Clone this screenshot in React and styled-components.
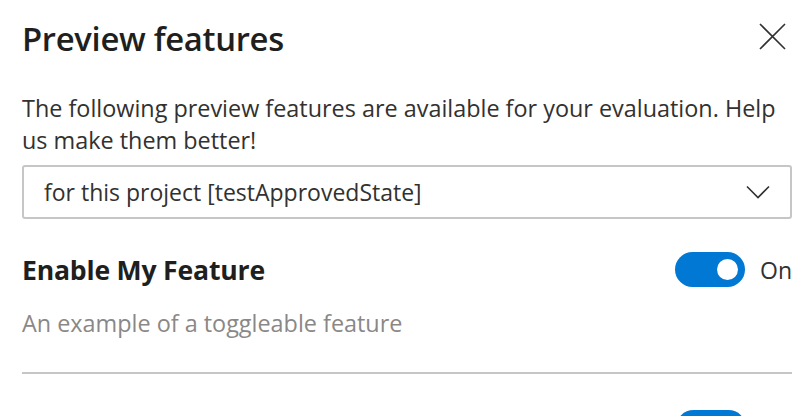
import { useState } from "react";
import styled, { createGlobalStyle } from "styled-components";

const GlobalStyle = createGlobalStyle`
  html, body {
    margin: 0;
    padding: 0;
    background: #ffffff;
    overflow: hidden;
  }
  body {
    font-family: "Open Sans", "Noto Sans", sans-serif;
    color: #323130;
  }
`;

const Panel = styled.div`
  width: 811px;
  height: 416px;
  box-sizing: border-box;
  padding: 0 19px 0 22px;
  overflow: hidden;
`;

const Header = styled.div`
  height: 76px;
  display: flex;
  align-items: center;
  justify-content: space-between;
`;

const Title = styled.h1`
  margin: 0;
  font-size: 32.8px;
  font-weight: 600;
  color: #201f1e;
  letter-spacing: -0.3px;
`;

const CloseButton = styled.button`
  width: 30px;
  height: 30px;
  margin: -4px 5px 0 0;
  padding: 0;
  border: none;
  background: transparent;
  display: flex;
  align-items: center;
  justify-content: center;
  cursor: pointer;
`;

const Intro = styled.p`
  margin: 16px 0 0;
  font-size: 23.4px;
  line-height: 32px;
  color: #323130;
`;

const Dropdown = styled.button`
  margin-top: 9px;
  width: 100%;
  height: 54px;
  box-sizing: border-box;
  border: 2px solid #c8c6c4;
  border-radius: 3px;
  background: #ffffff;
  display: flex;
  align-items: center;
  justify-content: space-between;
  padding: 0 20px;
  font-family: inherit;
  font-size: 23px;
  color: #323130;
  cursor: pointer;
`;

const Feature = styled.div`
  margin-top: ${(p) => p.$gap}px;
`;

const FeatureHead = styled.div`
  height: 35px;
  display: flex;
  align-items: center;
  justify-content: space-between;
`;

const FeatureName = styled.h2`
  margin: 0;
  font-size: 26.6px;
  font-weight: 700;
  color: #201f1e;
  letter-spacing: -0.2px;
`;

const ToggleWrap = styled.label`
  display: flex;
  align-items: center;
  gap: 15px;
  font-size: 23px;
  color: #323130;
  cursor: pointer;
`;

const Track = styled.span`
  width: 70px;
  height: 35px;
  box-sizing: border-box;
  border-radius: 18px;
  background: ${(p) => (p.$on ? "#0078d4" : "#ffffff")};
  border: ${(p) => (p.$on ? "none" : "2px solid #605e5c")};
  display: flex;
  align-items: center;
  justify-content: ${(p) => (p.$on ? "flex-end" : "flex-start")};
  padding: 0 7px;
`;

const Knob = styled.span`
  width: 21px;
  height: 21px;
  border-radius: 50%;
  background: ${(p) => (p.$on ? "#ffffff" : "#605e5c")};
`;

const FeatureDesc = styled.div`
  margin-top: 21px;
  font-size: 23.4px;
  line-height: 30px;
  color: #8a8886;
`;

const Divider = styled.hr`
  margin: 34px 0 0;
  border: none;
  height: 2px;
  background: #c8c6c4;
`;

// the next row is only partly in view: just its switch shows above the fold
const NextRow = styled.div`
  margin-top: 36px;
  display: flex;
  justify-content: flex-end;
  padding-right: 46px;
`;

const Toggle = ({ on, onChange }) => (
  <ToggleWrap onClick={onChange}>
    <Track $on={on}>
      <Knob $on={on} />
    </Track>
    <span>{on ? "On" : "Off"}</span>
  </ToggleWrap>
);

const App = () => {
  const [enabled, setEnabled] = useState(true);

  return (
    <>
      <GlobalStyle />
      <Panel>
        <Header>
          <Title>Preview features</Title>
          <CloseButton aria-label="Close">
            <svg width="27" height="27" viewBox="0 0 27 27">
              <path d="M1 1 L26 26 M26 1 L1 26" stroke="#323130" strokeWidth="1.6" fill="none" />
            </svg>
          </CloseButton>
        </Header>
        <Intro>
          The following preview features are available for your evaluation. Help
          us make them better!
        </Intro>
        <Dropdown>
          <span>for this project [testApprovedState]</span>
          <svg width="24" height="14" viewBox="0 0 24 14">
            <path d="M1 1.5 L12 12.5 L23 1.5" stroke="#323130" strokeWidth="1.6" fill="none" />
          </svg>
        </Dropdown>
        <Feature $gap={33}>
          <FeatureHead>
            <FeatureName>Enable My Feature</FeatureName>
            <Toggle on={enabled} onChange={() => setEnabled((v) => !v)} />
          </FeatureHead>
          <FeatureDesc>An example of a toggleable feature</FeatureDesc>
          <Divider />
        </Feature>
        <NextRow>
          <Track $on>
            <Knob $on />
          </Track>
        </NextRow>
      </Panel>
    </>
  );
};

export default App;
